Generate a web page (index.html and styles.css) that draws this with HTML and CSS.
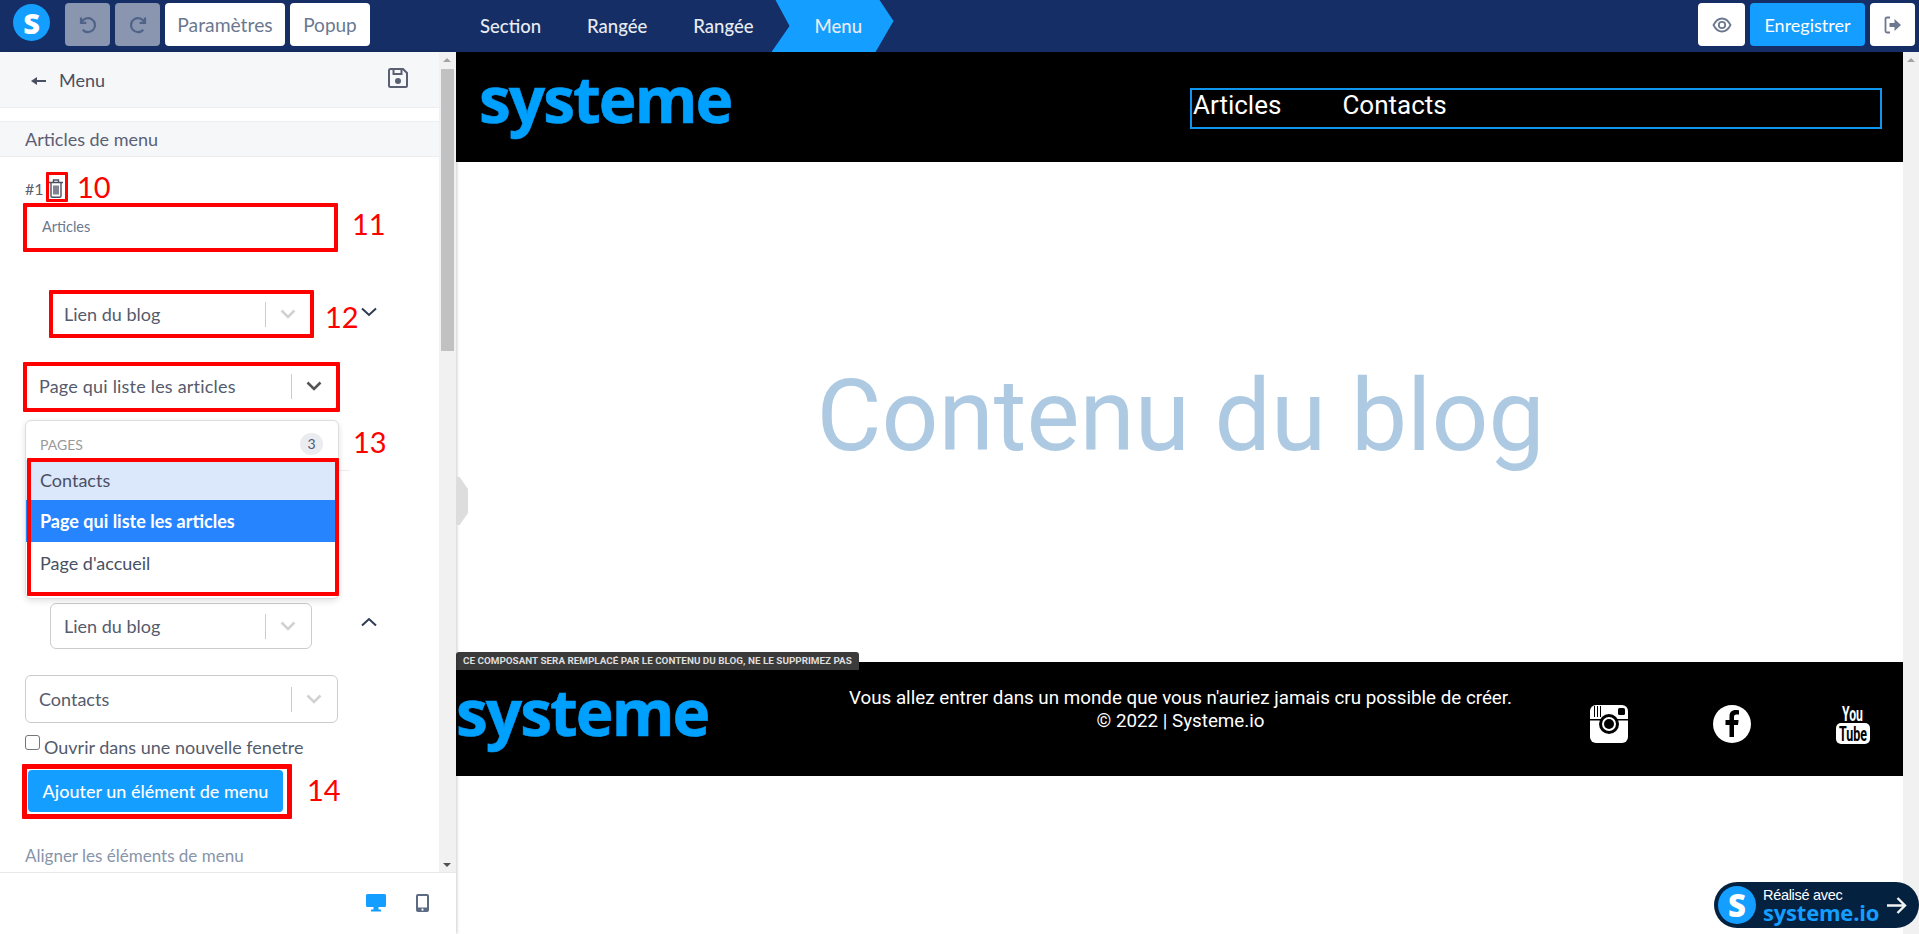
FILE: index.html
```html
<!DOCTYPE html>
<html lang="fr">
<head>
<meta charset="utf-8">
<title>Menu</title>
<link rel="stylesheet" href="styles.css">
</head>
<body>
<div class="app">
  <header class="topbar">
    <div class="brand">S</div>
    <button class="btn btn-icon btn-muted"><svg width="20" height="20" viewBox="0 0 20 20" fill="none" stroke="#4f6288" stroke-width="2.2"><path d="M3.5 7.5a7 7 0 1 1 1.2 7.2"/><path d="M3 2.5v5.3h5.3"/></svg></button>
    <button class="btn btn-icon btn-muted"><svg width="20" height="20" viewBox="0 0 20 20" fill="none" stroke="#4f6288" stroke-width="2.2"><path d="M16.500 7.500a7 7 0 1 0-1.200 7.200"/><path d="M17 2.500v5.300h-5.300"/></svg></button>
    <button class="btn btn-settings">Paramètres</button>
    <button class="btn btn-popup">Popup</button>
    <nav class="crumbs">
      <span class="crumb">Section</span>
      <span class="crumb">Rangée</span>
      <span class="crumb">Rangée</span>
      <span class="crumb crumb-active">Menu</span>
    </nav>
    <div class="top-actions">
      <button class="btn btn-eye"><svg width="20" height="20" viewBox="0 0 20 20" fill="none" stroke="#6b7890" stroke-width="1.800"><path d="M1.500 10C4 5 7 3.500 10 3.500S16 5 18.500 10C16 15 13 16.500 10 16.500S4 15 1.500 10Z"/><circle cx="10" cy="10" r="3.200"/></svg></button>
      <button class="btn btn-save">Enregistrer</button>
      <button class="btn btn-square"><svg width="20" height="20" viewBox="0 0 20 20" fill="none"><path d="M7 2.500H4a1.500 1.500 0 0 0-1.500 1.500v12A1.500 1.500 0 0 0 4 17.500h3" stroke="#6b7890" stroke-width="1.800"/><path d="M6.500 8h5V4l6.500 6-6.500 6v-4h-5Z" fill="#6b7890"/></svg></button>
    </div>
  </header>
  <div class="workspace">
    <aside class="sidebar">
      <div class="scroll-row">
        <div class="panel">
          <div class="panel-head">
            <span class="back"><svg width="16" height="10" viewBox="0 0 16 10" fill="#4a5064"><path d="M0 5 6 1v3h9v2H6v3Z"/></svg>Menu</span>
            <svg class="save-icon" width="22" height="22" viewBox="0 0 22 22" fill="none" stroke="#5a6074" stroke-width="2"><path d="M3.500 2h12.500l4 4v12.500a1.500 1.500 0 0 1-1.500 1.500h-15A1.500 1.500 0 0 1 2 18.500v-15A1.500 1.500 0 0 1 3.500 2Z"/><path d="M6.500 2v5h8V2"/><circle cx="11" cy="14" r="2" fill="#5a6074"/></svg>
          </div>
          <div class="band">Articles de menu</div>
          <div class="panel-body">
            <div class="item-num">#1
              <svg class="trash" width="14" height="19" viewBox="0 0 14 19" fill="none" stroke="#4a5064" stroke-width="1.400"><path d="M0 3.500h14M4.500 3.500V1h5v2.500M2 3.500V17a1.200 1.200 0 0 0 1.200 1.200h7.600A1.200 1.200 0 0 0 12 17V3.500M5 6.500v9M7 6.500v9M9 6.500v9"/></svg>
            </div>
            <div class="text-input">Articles</div>
            <div class="select-row select-row-first">
              <div class="select select-narrow"><span class="select-value">Lien du blog</span><i class="select-sep"></i><svg class="chev" width="16" height="10" viewBox="0 0 16 10" fill="none" stroke="#d2d2d2" stroke-width="2.600"><path d="m1.500 1.500 6.500 6.500 6.500-6.500"/></svg></div>
              <svg class="outer-chev" width="16" height="10" viewBox="0 0 16 10" fill="none" stroke="#2f3b52" stroke-width="2"><path d="m1 1.500 7 6.500 7-6.500"/></svg>
            </div>
            <div class="select select-open"><span class="select-value">Page qui liste les articles</span><i class="select-sep"></i><svg class="chev" width="16" height="10" viewBox="0 0 16 10" fill="none" stroke="#555" stroke-width="2.600"><path d="m1.500 1.500 6.500 6.500 6.500-6.500"/></svg></div>
            <hr class="rule">
            <div class="select-row select-row-second">
              <div class="select select-narrow"><span class="select-value">Lien du blog</span><i class="select-sep"></i><svg class="chev" width="16" height="10" viewBox="0 0 16 10" fill="none" stroke="#d2d2d2" stroke-width="2.600"><path d="m1.500 1.500 6.500 6.500 6.500-6.500"/></svg></div>
              <svg class="outer-chev outer-up" width="16" height="10" viewBox="0 0 16 10" fill="none" stroke="#2f3b52" stroke-width="2"><path d="m1 8.500 7-6.500 7 6.500"/></svg>
            </div>
            <div class="select select-contacts"><span class="select-value">Contacts</span><i class="select-sep"></i><svg class="chev" width="16" height="10" viewBox="0 0 16 10" fill="none" stroke="#d2d2d2" stroke-width="2.600"><path d="m1.500 1.500 6.500 6.500 6.500-6.500"/></svg></div>
            <label class="check"><span class="check-box"></span>Ouvrir dans une nouvelle fenetre</label>
            <button class="add-btn">Ajouter un élément de menu</button>
            <div class="align-label">Aligner les éléments de menu</div>
          </div>
        </div>
        <div class="scrollbar scrollbar-left"><span class="arrow-up"></span><span class="thumb"></span><span class="arrow-down"></span></div>
      </div>
      <div class="devices">
        <svg width="20" height="18" viewBox="0 0 20 18" fill="#149eff"><path d="M1.500 0h17A1.500 1.500 0 0 1 20 1.500v10a1.500 1.500 0 0 1-1.500 1.500h-6v2.500H15V17.500H5V15.500h2.500V13h-6A1.500 1.500 0 0 1 0 11.500v-10A1.500 1.500 0 0 1 1.500 0Z"/></svg>
        <svg width="13" height="18" viewBox="0 0 13 18"><rect width="13" height="18" rx="2" fill="#5d6a84"/><rect x="2" y="2" width="9" height="11.500" fill="#fff"/><circle cx="6.500" cy="15.700" r="1.100" fill="#fff"/></svg>
      </div>
      <div class="dropdown">
        <div class="dropdown-head"><span>PAGES</span><b class="count">3</b></div>
        <div class="option option-hover">Contacts</div>
        <div class="option option-selected">Page qui liste les articles</div>
        <div class="option">Page d'accueil</div>
      </div>
      <div class="mark mark-trash"></div><span class="mark-num num-10">10</span>
      <div class="mark mark-input"></div><span class="mark-num num-11">11</span>
      <div class="mark mark-link"></div><span class="mark-num num-12">12</span>
      <div class="mark mark-page"></div><span class="mark-num num-13">13</span>
      <div class="mark mark-list"></div>
      <div class="mark mark-add"></div><span class="mark-num num-14">14</span>
      <i class="handle"></i>
    </aside>
    <main class="canvas">
      <section class="site-head">
        <div class="wordmark">systeme</div>
        <div class="site-nav"><a>Articles</a><a>Contacts</a></div>
      </section>
      <section class="blog-body">Contenu du blog</section>
      <section class="site-foot">
        <span class="notice">CE COMPOSANT SERA REMPLACÉ PAR LE CONTENU DU BLOG, NE LE SUPPRIMEZ PAS</span>
        <div class="wordmark wordmark-foot">systeme</div>
        <p class="foot-text">Vous allez entrer dans un monde que vous n'auriez jamais cru possible de créer.<br>© 2022 | Systeme.io</p>
        <div class="socials">
          <svg width="38" height="38" viewBox="0 0 38 38"><rect width="38" height="38" rx="6" fill="#fff"/><rect y="14" width="38" height="1.500" fill="#000"/><path d="M4 1h1v11H4zM7 1h1v11H7zM10 1h1v11h-1z" fill="#000"/><rect x="28" y="3" width="7" height="7" rx="1.500" fill="#000"/><circle cx="19" cy="19" r="10" fill="#000"/><circle cx="19" cy="19" r="7" fill="#fff"/><circle cx="19" cy="19" r="5" fill="#000"/></svg>
          <svg width="38" height="38" viewBox="0 0 38 38"><circle cx="19" cy="19" r="19" fill="#fff"/><path d="M21 32V20h4l.6-5H21v-3c0-1.500.5-2.400 2.500-2.400H26V5.200C25.500 5.100 24 5 22.500 5 19 5 16.500 7.200 16.500 11.200V15h-4v5h4v12Z" fill="#000"/></svg>
          <svg class="yt" width="34" height="39" viewBox="0 0 34 39"><text class="yt-you" x="6" y="16" textLength="21" lengthAdjust="spacingAndGlyphs">You</text><rect y="18" width="34" height="21" rx="5" fill="#fff"/><text class="yt-tube" x="3" y="35.500" textLength="28" lengthAdjust="spacingAndGlyphs">Tube</text></svg>
        </div>
      </section>
    </main>
    <div class="scrollbar scrollbar-right"><span class="arrow-up"></span></div>
    <div class="badge">
      <span class="badge-logo">S</span>
      <span class="badge-text"><small>Réalisé avec</small><strong>systeme.io</strong></span>
      <svg width="20" height="17" viewBox="0 0 20 17" fill="none" stroke="#f2f2f2" stroke-width="2.400"><path d="M0 8.500h18M10.500 1l7.500 7.500-7.500 7.500"/></svg>
    </div>
  </div>
</div>
</body>
</html>
```
FILE: styles.css
```css
* { box-sizing: border-box; }
html, body { margin: 0; height: 100%; overflow: hidden; }
body { font-family: "Lato", "Noto Sans", sans-serif; color: #5a6074; background: #fff; }
.app { display: flex; flex-direction: column; height: 934px; }

/* top bar */
.topbar { display: flex; align-items: flex-start; height: 52px; padding: 3px 4px 0 13px; background: #152e65; flex: none; }
.brand { width: 37px; height: 37px; margin: 1px 15px 0 0; border-radius: 50%; background: #149eff; color: #fff; font: 800 29px/37px "Open Sans", sans-serif; text-align: center; }
.btn { border: 0; border-radius: 4px; height: 43px; background: #fff; color: #6b7890; font: 18px "Lato", sans-serif; padding: 0; display: flex; align-items: center; justify-content: center; }
.btn-icon { width: 45px; margin-right: 5px; }
.btn-muted { background: #8a96b0; }
.btn-settings { width: 120px; margin-right: 5px; font-size: 19.300px; }
.btn-popup { width: 80px; font-size: 19px; }
.crumbs { display: flex; align-items: center; height: 52px; margin-top: -3px; }
.crumb { color: #e8ebf2; font-size: 18.500px; font-weight: 500; margin-left: 46px; }
.crumb:first-child { margin-left: 110px; }
.crumb-active { width: 122px; height: 52px; line-height: 52px; margin-left: 18px; padding-left: 43px; background: #149eff; clip-path: polygon(4px 0, 108px 0, 122px 21px, 104px 52px, 0 52px, 18px 26px); }
.top-actions { display: flex; gap: 5px; margin-left: auto; }
.btn-eye { width: 47px; }
.btn-square { width: 45px; }
.btn-save { width: 115px; background: #149eff; color: #fff; }

/* layout */
.workspace { position: relative; display: flex; flex: 1; min-height: 0; }
.sidebar { position: relative; display: flex; flex-direction: column; width: 456px; flex: none; background: #fff; box-shadow: 1px 0 3px rgba(0, 0, 0, .2); z-index: 2; }
.scroll-row { display: flex; height: 821px; border-bottom: 1px solid #e6e8ec; overflow: hidden; }
.panel { flex: 1; min-width: 0; }
.scrollbar { position: relative; background: #f1f1f1; flex: none; }
.scrollbar-left { width: 17px; }
.scrollbar-right { width: 16px; }
.thumb { position: absolute; left: 2px; top: 17px; width: 13px; height: 282px; background: #c1c1c1; }
.arrow-up, .arrow-down { position: absolute; left: 4px; width: 0; height: 0; border: 4px solid transparent; }
.arrow-up { top: 6px; border-top: 0; border-bottom: 4px solid #a3a3a3; }
.arrow-down { bottom: 5px; border-bottom: 0; border-top: 4px solid #505050; }

/* panel */
.panel-head { display: flex; align-items: center; justify-content: space-between; height: 56px; padding: 0 30px 0 31px; background: #f6f7f9; border-bottom: 1px solid #eceef1; }
.back { display: flex; align-items: center; gap: 12px; font-size: 18px; color: #4a5064; }
.back svg { margin-top: 3px; }
.save-icon { margin-bottom: 3px; }
.band { height: 36px; margin-top: 13px; padding-left: 25px; line-height: 34px; font-size: 18px; background: #f6f7f9; border-top: 1px solid #eceef1; border-bottom: 1px solid #eceef1; }
.panel-body { padding: 19px 0 0 25px; }
.item-num { display: flex; align-items: center; gap: 5px; height: 24px; font-size: 16px; color: #5a6074; }
.text-input { width: 312px; height: 44px; margin-top: 6px; padding-left: 16px; border: 1px solid #ccc; border-radius: 4px; font-size: 14.500px; line-height: 40px; color: #6b7890; }
.select-row { display: flex; align-items: center; gap: 49px; margin-left: 25px; }
.select-row-first { margin-top: 41px; }
.select-row-second { margin-top: 132px; }
.outer-chev { margin-bottom: 4px; }
.outer-up { margin-bottom: 8px; }
.select { display: flex; align-items: center; height: 46px; padding: 0 15px 0 13px; border: 1px solid #ccc; border-radius: 6px; font-size: 18px; background: #fff; color: #555b6c; }
.select-narrow { width: 262px; }
.select-open, .select-contacts { width: 313px; height: 48px; }
.select-open { margin-top: 25px; border-top: 1px solid #2684ff; letter-spacing: .2px; }
.select-contacts { margin-top: 26px; }
.select-value { flex: 1; }
.select-sep { width: 1px; height: 25px; margin-right: 14px; background: #ccc; }
.rule { width: 325px; height: 1px; margin: 60px 0 0; border: 0; background: #eceef1; }
.check { display: flex; align-items: flex-start; gap: 4px; height: 26px; margin-top: 11px; font-size: 18px; line-height: 26px; color: #555b6c; white-space: nowrap; }
.check-box { width: 15px; height: 15px; margin-top: 1px; border: 1px solid #767676; border-radius: 3px; }
.add-btn { display: block; width: 255px; height: 42px; margin: 10px 0 0 3px; border: 0; border-radius: 4px; background: #149eff; color: #fff; font: 500 18px "Lato", sans-serif; }
.align-label { margin-top: 33px; font-size: 17px; color: #8794aa; }

.devices { display: flex; align-items: center; justify-content: flex-end; gap: 30px; flex: 1; padding: 0 27px 0 0; margin-top: -1px; }

/* dropdown */
.dropdown { position: absolute; left: 25px; top: 368px; width: 314px; height: 179px; background: #fff; border: 1px solid #ddd; border-radius: 6px; box-shadow: 0 2px 6px rgba(0, 0, 0, .12); font-size: 18px; }
.dropdown-head { display: flex; align-items: center; justify-content: space-between; height: 39px; padding: 7px 15px 0 14px; font-size: 14px; color: #999; }
.count { width: 23px; height: 22px; border-radius: 11px; background: #ebecf0; text-align: center; font-weight: 400; line-height: 22px; color: #4a5a78; }
.option { height: 42px; padding-left: 14px; line-height: 42px; color: #4a5064; }
.option-hover { height: 40px; line-height: 40px; background: #dbe7fb; }
.option-selected { background: #2684ff; color: #fff; font-weight: 700; }

/* annotations */
.mark { position: absolute; border: 4px solid #f00; border-radius: 1px; pointer-events: none; }
.mark-trash { left: 46px; top: 120px; width: 22px; height: 30px; border-width: 3px; }
.mark-input { left: 23px; top: 151px; width: 315px; height: 49px; }
.mark-link { left: 49px; top: 238px; width: 265px; height: 48px; }
.mark-page { left: 23px; top: 310px; width: 317px; height: 50px; }
.mark-list { left: 27px; top: 406px; width: 312px; height: 138px; }
.mark-add { left: 22px; top: 712px; width: 270px; height: 55px; border-width: 5px; }
.mark-num { position: absolute; color: #f00; font: 29px/36px "Lato", sans-serif; }
.num-10 { left: 77px; top: 117px; }
.num-11 { left: 352px; top: 154px; }
.num-12 { left: 325px; top: 247px; }
.num-13 { left: 353px; top: 372px; }
.num-14 { left: 307px; top: 720px; }
.handle { position: absolute; left: 456px; top: 425px; width: 12px; height: 48px; background: #ddd; clip-path: polygon(0 0, 30% 0, 100% 25%, 100% 75%, 30% 100%, 0 100%); }

/* canvas */
.canvas { position: relative; flex: 1; min-width: 0; background: #fff; overflow: hidden; }
.site-head { display: flex; align-items: center; height: 110px; background: #000; padding: 0 21px 0 23px; }
.wordmark { width: 251px; color: #00a0ff; font: 700 64px/1 "Open Sans", sans-serif; letter-spacing: -2px; -webkit-text-stroke: .6px #00a0ff; margin-bottom: 16px; }
.site-nav { display: flex; gap: 61px; width: 692px; height: 41px; margin-left: auto; margin-top: 3px; padding-left: 1px; border: 2px solid #0f96ef; color: #fff; font: 26px/31px "Roboto", sans-serif; }
.blog-body { display: flex; align-items: center; justify-content: center; height: 500px; padding: 6px 0 0 2px; color: #aecae2; font: 100px "Roboto", sans-serif; }
.site-foot { position: relative; display: flex; height: 114px; background: #000; }
.notice { position: absolute; left: 0; top: -10px; height: 18px; padding: 0 7px; background: #3b3b3b; border-radius: 3px 3px 0 0; color: #ddd; font: 700 9.900px/18px "Roboto", sans-serif; white-space: nowrap; }
.wordmark-foot { margin-top: 18px; margin-bottom: 0; }
.foot-text { width: 665px; margin: 25px 0 0 141px; color: #fff; font: 18.800px/23px "Roboto", sans-serif; text-align: center; white-space: nowrap; }
.socials { display: flex; align-items: center; gap: 85px; margin: 0 0 0 77px; padding-top: 10px; height: 114px; }
.yt { overflow: visible; }
.yt-you { font: 700 20px "Roboto", sans-serif; fill: #fff; }
.yt-tube { font: 700 20px "Roboto", sans-serif; fill: #000; }
.badge { position: absolute; right: 0; bottom: 6px; z-index: 3; display: flex; align-items: center; width: 205px; height: 46px; padding-left: 4px; border-radius: 23px; background: #04213f; color: #fff; }
.badge-logo { width: 38px; height: 38px; border-radius: 50%; background: #149eff; font: 800 31px/38px "Open Sans", sans-serif; text-align: center; flex: none; }
.badge-text { display: flex; flex-direction: column; margin-left: 7px; width: 118px; flex: none; }
.badge-text small { font: 14.500px/14px "Liberation Sans", sans-serif; letter-spacing: -.3px; }
.badge-text strong { font: 700 22px/20px "Open Sans", sans-serif; color: #149eff; letter-spacing: -.2px; }
.badge svg { margin-left: 6px; flex: none; }
```
